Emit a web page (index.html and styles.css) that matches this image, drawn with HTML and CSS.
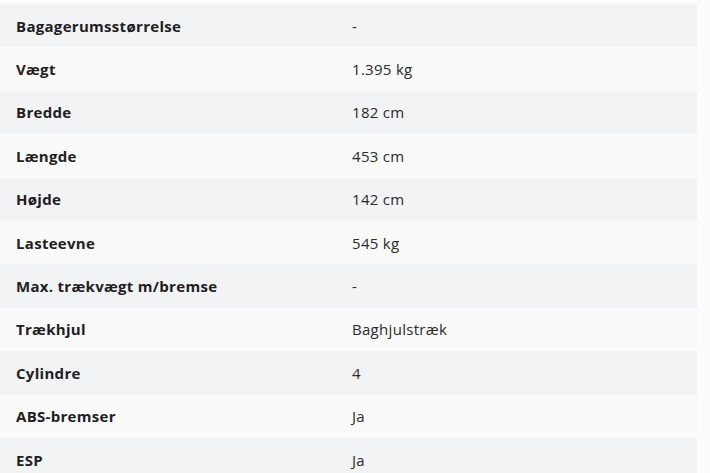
FILE: index.html
```html
<!DOCTYPE html>
<html lang="da">
<head>
<meta charset="utf-8">
<link rel="stylesheet" href="styles.css">
</head>
<body>
<div class="specs">
  <div class="row"><div class="label">Bagagerumsstørrelse</div><div class="value">-</div></div>
  <div class="row"><div class="label">Vægt</div><div class="value">1.395 kg</div></div>
  <div class="row"><div class="label">Bredde</div><div class="value">182 cm</div></div>
  <div class="row"><div class="label">Længde</div><div class="value">453 cm</div></div>
  <div class="row"><div class="label">Højde</div><div class="value">142 cm</div></div>
  <div class="row"><div class="label">Lasteevne</div><div class="value">545 kg</div></div>
  <div class="row"><div class="label">Max. trækvægt m/bremse</div><div class="value">-</div></div>
  <div class="row"><div class="label">Trækhjul</div><div class="value">Baghjulstræk</div></div>
  <div class="row"><div class="label">Cylindre</div><div class="value">4</div></div>
  <div class="row"><div class="label">ABS-bremser</div><div class="value">Ja</div></div>
  <div class="row"><div class="label">ESP</div><div class="value">Ja</div></div>
</div>
</body>
</html>
```
FILE: styles.css
```css
html, body {
  margin: 0;
  padding: 0;
  background: #fcfcfc;
}
body {
  padding-top: 4px;
  font-family: "Open Sans", "Liberation Sans", sans-serif;
  color: #1f2023;
  overflow: hidden;
}
.specs {
  width: 697px;
  display: flex;
  flex-direction: column;
}
.row {
  display: grid;
  grid-template-columns: 352px 1fr;
  align-items: center;
  height: 43.4px;
  background: #fafafa;
}
.row:nth-child(odd) {
  background: #f2f3f5;
}
.label {
  padding-left: 16px;
  font-weight: 700;
  font-size: 15px;
  letter-spacing: 0.3px;
}
.value {
  font-size: 15px;
  letter-spacing: 0.3px;
  color: #2a2b2e;
}
```
